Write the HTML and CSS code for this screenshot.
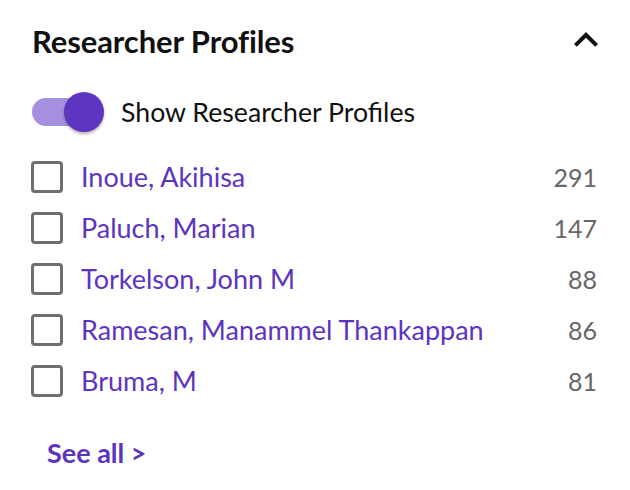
FILE: index.html
```html
<!DOCTYPE html>
<html>
<head>
<meta charset="utf-8">
<link rel="stylesheet" href="styles.css">
</head>
<body>
<section class="panel">
  <header class="head">
    <h2 class="title">Researcher Profiles</h2>
    <svg class="chev" width="48" height="48" viewBox="0 0 24 24"><path d="M12 8l-6 6 1.41 1.41L12 10.83l4.59 4.58L18 14z" fill="#111"/></svg>
  </header>
  <div class="toggle-row">
    <span class="switch"><span class="track"></span><span class="thumb"></span></span>
    <span class="toggle-label">Show Researcher Profiles</span>
  </div>
  <ul class="list">
    <li class="row"><span class="box"></span><a class="name">Inoue, Akihisa</a><span class="count">291</span></li>
    <li class="row"><span class="box"></span><a class="name">Paluch, Marian</a><span class="count">147</span></li>
    <li class="row"><span class="box"></span><a class="name">Torkelson, John M</a><span class="count">88</span></li>
    <li class="row"><span class="box"></span><a class="name">Ramesan, Manammel Thankappan</a><span class="count">86</span></li>
    <li class="row"><span class="box"></span><a class="name">Bruma, M</a><span class="count">81</span></li>
  </ul>
  <a class="see-all">See all &gt;</a>
</section>
</body>
</html>
```
FILE: styles.css
```css
html, body { margin: 0; padding: 0; background: #fff; }
body { font-family: "Lato", "Noto Sans", sans-serif; color: #111; }
.panel { padding: 16px 33px 0 31px; width: 566px; }
.head { display: flex; justify-content: space-between; align-items: center; height: 50px; }
.title { margin: 0 0 0 1px; font-size: 31px; font-weight: 700; color: #111; letter-spacing: -0.1px; }
.chev { margin-right: -13px; margin-top: -2px; }
.toggle-row { display: flex; align-items: center; height: 40px; margin-top: 26px; }
.switch { position: relative; width: 73px; height: 40px; margin-left: 1px; flex: none; }
.track { position: absolute; left: 0; top: 6px; width: 68px; height: 28px; border-radius: 14px; background: #a590df; }
.thumb { position: absolute; left: 32px; top: 0; width: 40px; height: 40px; border-radius: 50%; background: #5e35c0; box-shadow: 0 2px 3px rgba(0,0,0,0.3); }
.toggle-label { margin-left: 16px; font-size: 26.7px; color: #111; }
.list { list-style: none; margin: 19px 0 0; padding: 0; }
.row { display: flex; align-items: center; height: 51px; }
.box { box-sizing: border-box; width: 32px; height: 32px; border: 3.5px solid #6f6f6f; border-radius: 4px; flex: none; }
.name { margin-left: 18px; font-size: 27px; color: #5b34c0; flex: 1; }
.count { font-size: 25px; color: #666; }
.see-all { display: block; margin: 32px 0 0 16px; font-size: 27px; font-weight: 700; color: #5b34c0; line-height: 30px; }
```
